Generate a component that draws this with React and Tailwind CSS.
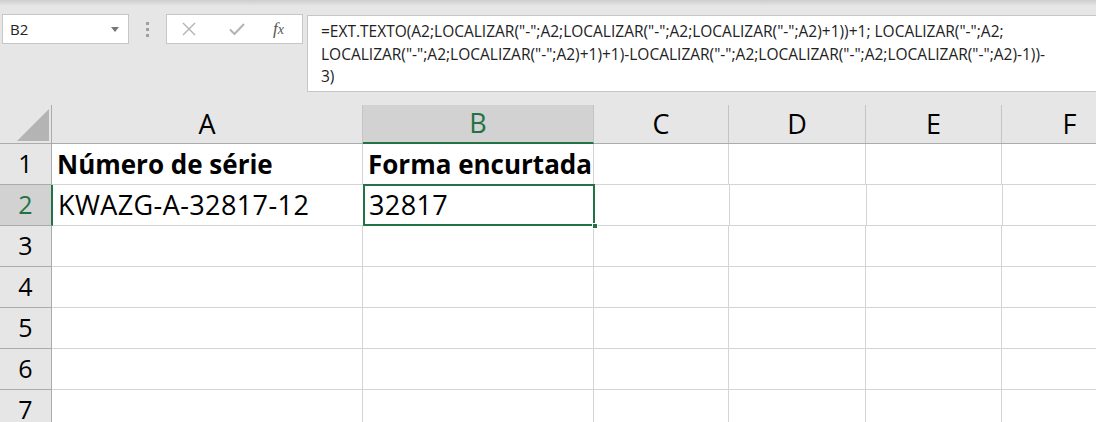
import React from 'react';

const FONT = { fontFamily: '"Open Sans", "Noto Sans", sans-serif' };

const columns = [
  { key: 'A', w: 'w-[311px]' },
  { key: 'B', w: 'w-[231px]' },
  { key: 'C', w: 'w-[135px]' },
  { key: 'D', w: 'w-[137px]' },
  { key: 'E', w: 'w-[136px]' },
  { key: 'F', w: 'w-[136px]' },
];

const data = {
  1: { A: 'Número de série', B: 'Forma encurtada', bold: true },
  2: { A: 'KWAZG-A-32817-12', B: '32817' },
};

const formula = [
  '=EXT.TEXTO(A2;LOCALIZAR("-";A2;LOCALIZAR("-";A2;LOCALIZAR("-";A2)+1))+1; LOCALIZAR("-";A2;',
  'LOCALIZAR("-";A2;LOCALIZAR("-";A2)+1)+1)-LOCALIZAR("-";A2;LOCALIZAR("-";A2;LOCALIZAR("-";A2)-1))-',
  '3)',
];

const FormulaBar = () => (
  <div className="flex items-start pt-[8px]">
    {/* name box */}
    <div className="ml-[2px] w-[127px] h-[30px] bg-white border border-[#c6c6c6] flex items-center justify-between pl-[7px] pr-[9px]">
      <span className="text-[15px] text-[#222]">B2</span>
      <svg width="8" height="5" viewBox="0 0 8 5"><path d="M0 0h8L4 5z" fill="#777" /></svg>
    </div>
    {/* grip dots */}
    <div className="w-[37px] h-[30px] flex flex-col items-center justify-center gap-[3px]">
      <div className="w-[3px] h-[3px] bg-[#a0a0a0]" />
      <div className="w-[3px] h-[3px] bg-[#a0a0a0]" />
      <div className="w-[3px] h-[3px] bg-[#a0a0a0]" />
    </div>
    {/* cancel / enter / fx */}
    <div className="w-[137px] h-[30px] bg-white border border-[#c6c6c6] flex items-center pl-[14px]">
      <svg width="16" height="16" viewBox="0 0 16 16">
        <path d="M2 2L14 14M14 2L2 14" stroke="#b3b3b3" strokeWidth="1.4" fill="none" />
      </svg>
      <svg className="ml-[31px]" width="18" height="16" viewBox="0 0 18 16">
        <path d="M2 8.5L6.5 13L16 3" stroke="#b3b3b3" strokeWidth="2" fill="none" />
      </svg>
      <span className="ml-[27px] text-[17px] italic text-[#555]" style={{ fontFamily: '"Liberation Serif", serif' }}>
        f<span className="text-[14px]">x</span>
      </span>
    </div>
    {/* formula text */}
    <div className="ml-[4px] flex-1 h-[77px] mt-[1px] bg-white border border-[#c6c6c6] border-r-0 pl-[13px] pt-[4px] text-[15.5px] leading-[22.5px] text-[#222]">
      {formula.map((l, i) => (
        <div key={i} className="whitespace-nowrap">{l}</div>
      ))}
    </div>
  </div>
);

const HeaderRow = () => (
  <div className="flex h-[39px] border-b border-[#ababab]">
    <div className="w-[52px] shrink-0 border-r border-[#ababab] relative">
      <svg className="absolute left-[17px] top-[4px]" width="33" height="33" viewBox="0 0 33 33">
        <path d="M0 32L32 0V32z" fill="#b4b4b4" />
      </svg>
    </div>
    {columns.map(c => (
      <div key={c.key}
        className={`${c.w} shrink-0 flex items-center justify-center text-[27px] border-r border-[#c4c4c4] ${c.key === 'B' ? 'bg-[#d2d2d2] text-[#217346] border-b-2 border-b-[#217346] mb-[-1px]' : 'text-black'}`}>
        {c.key}
      </div>
    ))}
  </div>
);

const Row = ({ n }) => {
  const row = data[n] || {};
  const selected = n === 2;
  return (
    <div className="flex h-[41px]">
      <div className={`w-[52px] shrink-0 flex items-center justify-center text-[25px] border-b border-[#ababab] ${selected ? 'bg-[#d2d2d2] text-[#217346] border-r-2 border-r-[#217346] w-[53px]' : 'border-r border-[#ababab] text-black'}`}>
        {n}
      </div>
      {columns.map(c => (
        <div key={c.key}
          className={`${c.w} shrink-0 bg-white border-r border-b border-[#d4d4d4] flex items-center pl-[5px] text-black whitespace-nowrap ${row.bold ? 'font-bold text-[26px]' : 'text-[27px] tracking-[0.4px]'} ${selected && c.key === 'B' ? 'relative' : ''}`}>
          {row[c.key]}
          {selected && c.key === 'B' && (
            <>
              <div className="absolute -top-[1px] -left-[1px] right-[-1px] bottom-[-1px] border-2 border-[#217346]" />
              <div className="absolute right-[-4px] bottom-[-4px] w-[6px] h-[6px] bg-[#217346] border border-white" />
            </>
          )}
        </div>
      ))}
    </div>
  );
};

export default function App() {
  return (
    <div className="w-[1096px] h-[422px] overflow-hidden bg-[#e6e6e6] relative" style={FONT}>
      <div className="h-[6px] bg-gradient-to-b from-[#cdcdcd] to-[#e6e6e6]" />
      <FormulaBar />
      <div className="mt-[13px] flex flex-col">
        <HeaderRow />
        {[1, 2, 3, 4, 5, 6, 7].map(n => <Row key={n} n={n} />)}
      </div>
    </div>
  );
}
